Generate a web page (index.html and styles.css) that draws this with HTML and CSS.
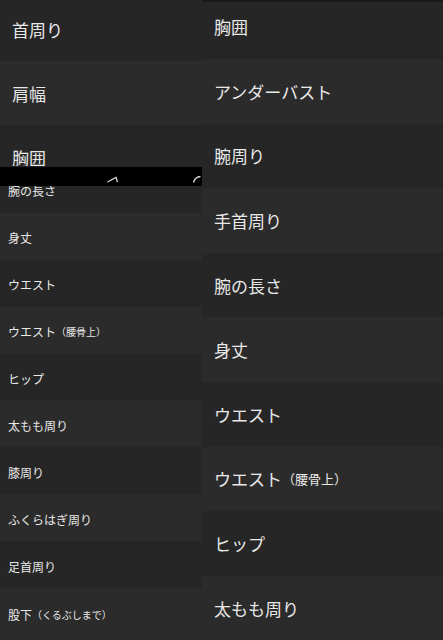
FILE: index.html
```html
<!DOCTYPE html>
<html lang="ja">
<head>
<meta charset="utf-8">
<link rel="stylesheet" href="styles.css">
</head>
<body>
<div class="screen">
  <div class="left">
    <div class="big-list">
      <div class="big-row dark">首周り</div>
      <div class="big-row light">肩幅</div>
      <div class="big-row dark">胸囲</div>
    </div>
    <div class="small-list">
      <div class="small-row dark">腕の長さ</div>
      <div class="small-row light">身丈</div>
      <div class="small-row dark">ウエスト</div>
      <div class="small-row light">ウエスト<span class="note">（腰骨上）</span></div>
      <div class="small-row dark">ヒップ</div>
      <div class="small-row light">太もも周り</div>
      <div class="small-row dark">膝周り</div>
      <div class="small-row light">ふくらはぎ周り</div>
      <div class="small-row dark">足首周り</div>
      <div class="small-row light">股下<span class="note">（くるぶしまで）</span></div>
    </div>
    <div class="black-bar">
      <svg class="frag" width="202" height="19" viewBox="0 0 202 19">
        <path d="M107.5 15 L116 10.5 L117.5 15" fill="none" stroke="#d8d8d8" stroke-width="1.3"/>
        <path d="M193.5 15.5 Q195 10 200.5 9.5" fill="none" stroke="#d8d8d8" stroke-width="1.3"/>
      </svg>
    </div>
  </div>
  <div class="right">
    <div class="right-list">
      <div class="r-row dark">胸囲</div>
      <div class="r-row light">アンダーバスト</div>
      <div class="r-row dark">腕周り</div>
      <div class="r-row light">手首周り</div>
      <div class="r-row dark">腕の長さ</div>
      <div class="r-row light">身丈</div>
      <div class="r-row dark">ウエスト</div>
      <div class="r-row light">ウエスト<span class="note">（腰骨上）</span></div>
      <div class="r-row dark">ヒップ</div>
      <div class="r-row light">太もも周り</div>
    </div>
    <div class="top-line"></div>
  </div>
</div>
</body>
</html>
```

FILE: styles.css
```css
html, body {
  margin: 0;
  padding: 0;
  background: #262626;
  height: 640px;
  overflow: hidden;
}
body {
  font-family: "Noto Sans CJK JP", "Noto Sans", sans-serif;
  color: #e8e8e8;
}
.screen {
  display: flex;
  width: 443px;
  height: 640px;
  overflow: hidden;
}
.dark { background: #262626; }
.light { background: #2b2b2b; }

.left {
  position: relative;
  width: 202px;
  flex: none;
  display: flex;
  flex-direction: column;
  overflow: hidden;
}
.big-list {
  height: 166px;
  overflow: hidden;
  flex: none;
}
.big-row {
  height: 64px;
  display: flex;
  align-items: center;
  padding-left: 12px;
  font-size: 17px;
}
.big-row:first-child { margin-top: -3px; }

.small-list {
  display: flex;
  flex-direction: column;
}
.small-row {
  height: 46.9px;
  flex: none;
  box-sizing: border-box;
  display: flex;
  align-items: center;
  padding-left: 8px;
  padding-top: 3px;
  font-size: 12px;
}
.small-row .note { font-size: 10px; }
.small-row:last-child { height: 60px; padding-bottom: 10px; }

.black-bar {
  position: absolute;
  left: 0;
  top: 167px;
  width: 202px;
  height: 19px;
  background: #000;
}
.frag { display: block; }

.right {
  position: relative;
  flex: 1;
  overflow: hidden;
}
.right-list {
  margin-top: -5.6px;
}
.r-row {
  height: 64.6px;
  display: flex;
  align-items: center;
  padding-left: 12px;
  font-size: 17px;
}
.r-row .note { font-size: 13px; }
.top-line {
  position: absolute;
  left: 0;
  top: 0;
  width: 100%;
  height: 2px;
  background: #1b1b1b;
}
```
